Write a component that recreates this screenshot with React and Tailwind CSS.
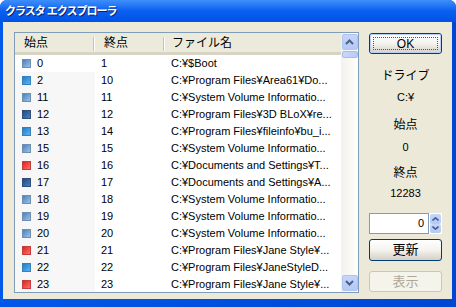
import React from "react";

const rows = [
  ["0", "1", "C:¥$Boot", "steel"],
  ["2", "10", "C:¥Program Files¥Area61¥Do...", "bright"],
  ["11", "11", "C:¥System Volume Informatio...", "steel"],
  ["12", "12", "C:¥Program Files¥3D BLoX¥re...", "dark"],
  ["13", "14", "C:¥Program Files¥fileinfo¥bu_i...", "bright"],
  ["15", "15", "C:¥System Volume Informatio...", "steel"],
  ["16", "16", "C:¥Documents and Settings¥T...", "red"],
  ["17", "17", "C:¥Documents and Settings¥A...", "dark"],
  ["18", "18", "C:¥System Volume Informatio...", "steel"],
  ["19", "19", "C:¥System Volume Informatio...", "steel"],
  ["20", "20", "C:¥System Volume Informatio...", "steel"],
  ["21", "21", "C:¥Program Files¥Jane Style¥...", "red"],
  ["22", "22", "C:¥Program Files¥JaneStyleD...", "bright"],
  ["23", "23", "C:¥Program Files¥Jane Style¥...", "red"],
];

const sq = {
  steel: "bg-gradient-to-br from-[#4a82c0] to-[#9cc2e6] border-[#6f8fb0]",
  bright: "bg-gradient-to-br from-[#1a7cd0] to-[#5cb4ee] border-[#3a80b8]",
  dark: "bg-gradient-to-br from-[#1d4c86] to-[#4c80bc] border-[#2d4f78]",
  red: "bg-gradient-to-br from-[#e41414] to-[#ff6a6a] border-[#c04040]",
};

const font = { fontFamily: '"Liberation Sans","Noto Sans CJK JP",sans-serif' };

function Btn({ children, focus, disabled, h }) {
  return (
    <div
      className={`w-[73px] ${h} rounded-[3px] border flex items-center justify-center ${
        disabled
          ? "border-[#c9c7ba] bg-[#f5f4ea] text-[#aca899]"
          : "border-[#003c74] bg-gradient-to-b from-[#ffffff] via-[#f4f3ee] to-[#d6d0c5] text-black"
      }`}
    >
      {focus ? (
        <div className="w-full h-full rounded-[2px] border border-[#b8d0f6] flex items-center justify-center">
          <div className="w-[65px] h-[13px] border border-dotted border-[#555] flex items-center justify-center text-[12px]">
            {children}
          </div>
        </div>
      ) : (
        <span className="text-[13px]">{children}</span>
      )}
    </div>
  );
}

export default function App() {
  return (
    <div className="w-[456px] h-[307px] overflow-hidden" style={font}>
      <div className="w-[456px] h-[307px] flex flex-col bg-[#0046d5] rounded-t-[7px] overflow-hidden">
        <div className="h-[22px] shrink-0 bg-gradient-to-b from-[#3d8ffa] via-[#0a5ef0] to-[#0052e4] flex items-center pl-[5px]">
          <span
            className="text-white font-bold text-[11px] tracking-[-1px]"
            style={{ textShadow: "1px 1px 0 #0a1e6e" }}
          >
            クラスタ エクスプローラ
          </span>
        </div>
        <div className="flex-1 flex bg-gradient-to-r from-[#0058e8] via-[#0050e0] to-[#0046d5] px-[3px] pr-[4px] pb-[8px]">
          <div className="flex-1 bg-[#ece9d8] flex pl-[11px] pt-[10px]">
            {/* list view */}
            <div className="w-[345px] h-[261px] border border-[#7f9db9] bg-white flex">
              <div className="w-[326px] flex flex-col overflow-hidden">
                <div className="h-[22px] shrink-0 flex bg-[#ebeadb] border-b-[3px] border-[#d8d4c4] text-[12px] text-black">
                  <div className="w-[80px] flex items-center pl-[9px] relative">
                    始点
                    <div className="absolute right-0 top-[4px] h-[14px] w-[2px] border-l border-[#c7c5b2] bg-white" />
                  </div>
                  <div className="w-[70px] flex items-center pl-[9px] relative">
                    終点
                    <div className="absolute right-0 top-[4px] h-[14px] w-[2px] border-l border-[#c7c5b2] bg-white" />
                  </div>
                  <div className="flex-1 flex items-center pl-[7px]">ファイル名</div>
                </div>
                <div className="flex flex-col text-[11px] text-black">
                  {rows.map((r, i) => (
                    <div key={i} className="h-[17px] shrink-0 flex items-center">
                      <div
                        className={`w-[80px] h-full flex items-center pl-[7px] ${
                          i === 0 ? "bg-white" : "bg-[#f7f7f7]"
                        }`}
                      >
                        <div className={`w-[9px] h-[9px] border ${sq[r[3]]}`} />
                        <span className="ml-[6px]">{r[0]}</span>
                      </div>
                      <div className="w-[70px] pl-[6px]">{r[1]}</div>
                      <div className="flex-1 pl-[6px] whitespace-nowrap overflow-hidden">{r[2]}</div>
                    </div>
                  ))}
                </div>
              </div>
              {/* scrollbar */}
              <div className="w-[17px] flex flex-col bg-gradient-to-r from-[#f3f1ec] to-[#fefefb]">
                <div className="h-[16px] w-[16px] mx-auto mt-[1px] rounded-[2px] bg-gradient-to-b from-[#c6d5fb] to-[#b4c9f7] border border-[#b0c4f0] flex items-center justify-center">
                  <svg width="9" height="6" viewBox="0 0 9 6">
                    <path d="M1 5 L4.5 1.5 L8 5" fill="none" stroke="#4d6185" strokeWidth="2" />
                  </svg>
                </div>
                <div className="h-[7px] w-[16px] mx-auto mt-[1px] rounded-[2px] bg-gradient-to-r from-[#c9d8fc] to-[#b8ccf6] border border-[#a8bcec]" />
                <div className="flex-1" />
                <div className="h-[16px] w-[16px] mx-auto mb-[1px] rounded-[2px] bg-gradient-to-b from-[#c6d5fb] to-[#b4c9f7] border border-[#b0c4f0] flex items-center justify-center">
                  <svg width="9" height="6" viewBox="0 0 9 6">
                    <path d="M1 1 L4.5 4.5 L8 1" fill="none" stroke="#4d6185" strokeWidth="2" />
                  </svg>
                </div>
              </div>
            </div>
            {/* right panel */}
            <div className="ml-[10px] w-[73px] flex flex-col items-center text-[12px] text-black pt-[1px]">
              <Btn focus h="h-[21px]">OK</Btn>
              <div className="mt-[14px] h-[16px] leading-[16px]">ドライブ</div>
              <div className="mt-[5px] h-[16px] leading-[16px] text-[11px]">C:¥</div>
              <div className="mt-[12px] h-[16px] leading-[16px]">始点</div>
              <div className="mt-[6px] h-[16px] leading-[16px] text-[11px]">0</div>
              <div className="mt-[10px] h-[16px] leading-[16px]">終点</div>
              <div className="mt-[4px] h-[16px] leading-[16px] text-[11px]">12283</div>
              <div className="mt-[12px] h-[21px] w-[73px] flex">
                <div className="w-[60px] h-full border border-[#7f9db9] bg-white flex items-center justify-end pr-[4px] text-[11px]">
                  0
                </div>
                <div className="w-[13px] h-full flex flex-col bg-white">
                  <div className="flex-1 m-[1px] mb-0 rounded-[2px] bg-gradient-to-b from-[#c6d5fb] to-[#b4c9f7] flex items-center justify-center">
                    <svg width="7" height="4" viewBox="0 0 7 4">
                      <path d="M0.5 3.5 L3.5 0.8 L6.5 3.5" fill="none" stroke="#4d6185" strokeWidth="1.6" />
                    </svg>
                  </div>
                  <div className="flex-1 m-[1px] mt-0 rounded-[2px] bg-gradient-to-b from-[#c6d5fb] to-[#b4c9f7] flex items-center justify-center">
                    <svg width="7" height="4" viewBox="0 0 7 4">
                      <path d="M0.5 0.5 L3.5 3.2 L6.5 0.5" fill="none" stroke="#4d6185" strokeWidth="1.6" />
                    </svg>
                  </div>
                </div>
              </div>
              <div className="mt-[5px]">
                <Btn h="h-[22px]">更新</Btn>
              </div>
              <div className="mt-[10px]">
                <Btn disabled h="h-[21px]">表示</Btn>
              </div>
            </div>
          </div>
        </div>
      </div>
    </div>
  );
}
